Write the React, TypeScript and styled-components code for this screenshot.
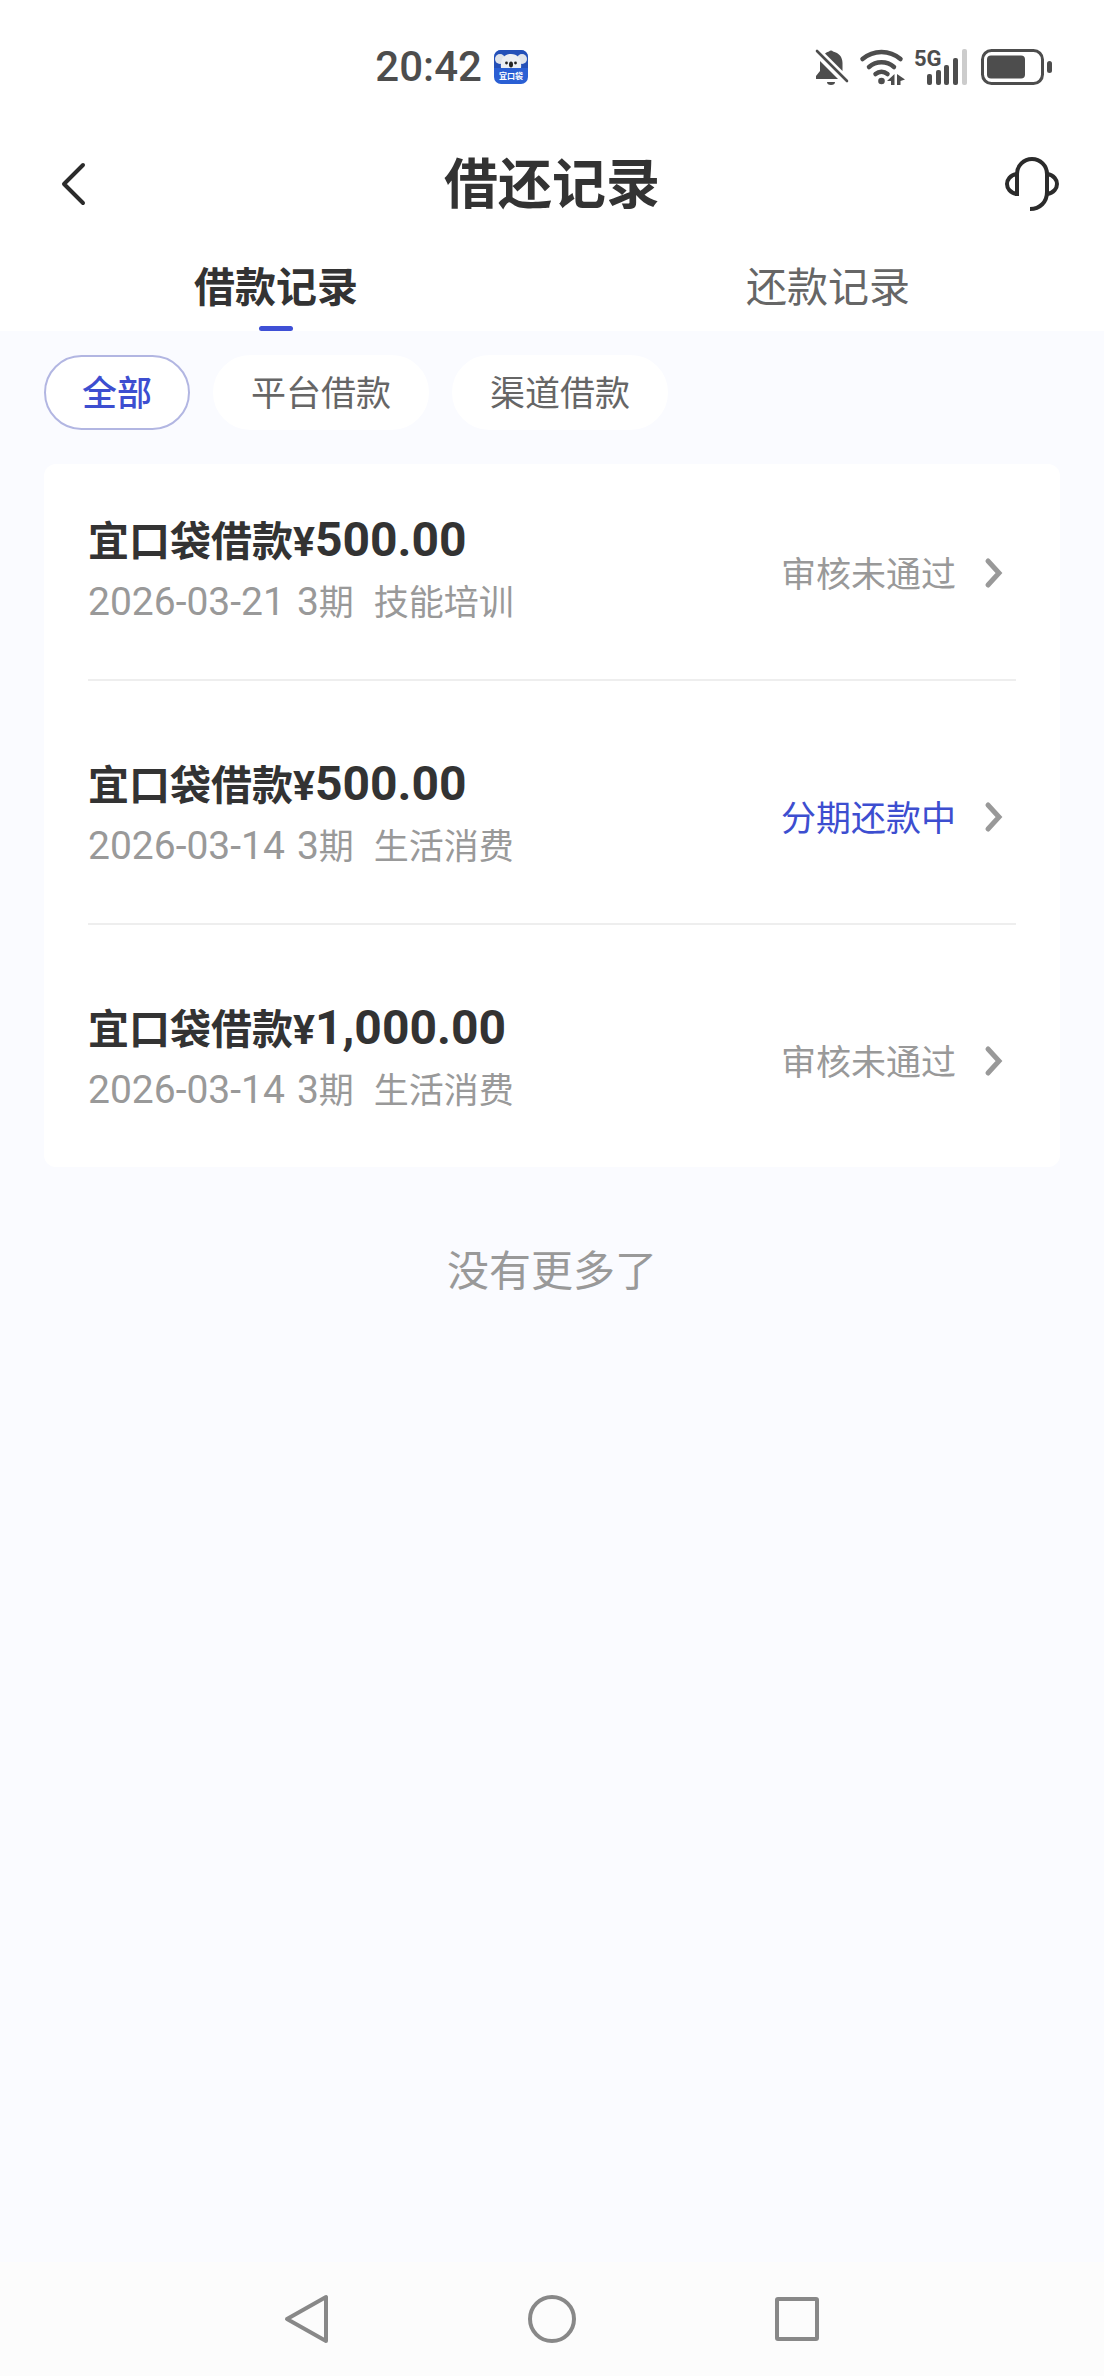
import React, { useState } from "react";
import styled, { createGlobalStyle } from "styled-components";

const cjk = '"Noto Sans CJK SC", sans-serif';
const latin = 'Roboto, "Noto Sans CJK SC", sans-serif';

const GlobalStyle = createGlobalStyle`
  * { box-sizing: border-box; }
  body { margin: 0; background: #fafbff; font-family: ${cjk}; color: #333; }
  button { border: 0; padding: 0; background: none; font: inherit; color: inherit; cursor: pointer; }
  h1, p, ul { margin: 0; padding: 0; }
  ul { list-style: none; }
  svg { display: block; flex: none; overflow: visible; }
`;

const Screen = styled.div`
  display: flex;
  flex-direction: column;
  min-height: 100vh;
`;

const StatusBar = styled.div`
  display: flex;
  justify-content: space-between;
  align-items: center;
  height: 134px;
  padding: 0 52px 0 34%;
  background: #fff;
  color: #4d4d4d;
`;

const StatusGroup = styled.div<{ $gap: number }>`
  display: flex;
  align-items: center;
  gap: ${(p) => p.$gap}px;
`;

const Clock = styled.time`
  font: 500 42px/48px ${latin};
`;

const Header = styled.header`
  display: grid;
  grid-template-columns: 1fr auto 1fr;
  align-items: center;
  height: 98px;
  padding: 0 44px;
  background: #fff;
`;

const HeaderButton = styled.button<{ $end?: boolean }>`
  justify-self: ${(p) => (p.$end ? "end" : "start")};
`;

const Title = styled.h1`
  padding-bottom: 4px;
  font-size: 54px;
  line-height: 80px;
  font-weight: 700;
`;

const Tabs = styled.div`
  display: flex;
  background: #fff;
`;

const Tab = styled.button<{ $active: boolean }>`
  flex: 1;
  display: flex;
  flex-direction: column;
  align-items: center;
  gap: 12px;
  padding-top: 22px;
  font-size: 41px;
  line-height: 60px;
  font-weight: ${(p) => (p.$active ? 700 : 400)};
  color: ${(p) => (p.$active ? "#333" : "#666")};

  &::after {
    content: "";
    width: 34px;
    height: 5px;
    border-radius: 3px;
    background: ${(p) => (p.$active ? "#3f50d6" : "transparent")};
  }
`;

const Main = styled.main`
  flex: 1;
  padding: 24px 44px;
`;

const Filters = styled.div`
  display: flex;
  gap: 23px;
  margin-bottom: 34px;
`;

const Chip = styled.button<{ $active: boolean }>`
  height: 75px;
  padding: 0 36px 4px;
  border: 2px solid ${(p) => (p.$active ? "#b2b6e2" : "#fff")};
  border-radius: 38px;
  background: #fff;
  font-size: 35px;
  line-height: 60px;
  font-weight: ${(p) => (p.$active ? 500 : 400)};
  color: ${(p) => (p.$active ? "#3d4ed0" : "#666")};
`;

const Card = styled.ul`
  padding: 0 44px;
  border-radius: 12px;
  background: #fff;
`;

const Item = styled.li`
  & + & {
    border-top: 2px solid #eee;
    padding-top: 27px;
  }
`;

const Row = styled.a`
  display: flex;
  justify-content: space-between;
  align-items: center;
  padding-right: 14px;
  color: inherit;
  text-decoration: none;
`;

const Details = styled.div`
  display: grid;
  gap: 2px;
  padding: 44px 0 49px;
`;

const Name = styled.p`
  display: flex;
  align-items: baseline;
  height: 60px;
  font-size: 41px;
  line-height: 60px;
  font-weight: 700;
`;

const Currency = styled.span`
  font-family: ${latin};
`;

const Amount = styled.span`
  font-family: ${latin};
  font-size: 48px;
  line-height: 1;
`;

const Meta = styled.p`
  display: flex;
  align-items: baseline;
  height: 60px;
  font-size: 35px;
  line-height: 60px;
  color: #999;
`;

const Term = styled.span`
  margin: 0 20px 0 12px;
`;

const Digits = styled.span`
  font-family: ${latin};
  font-size: 39px;
  line-height: 1;
`;

const State = styled.span<{ $active: boolean }>`
  display: flex;
  align-items: center;
  gap: 28px;
  font-size: 35px;
  line-height: 60px;
  color: ${(p) => (p.$active ? "#3d4ed0" : "#999")};
`;

const EndNote = styled.p`
  padding-top: 70px;
  text-align: center;
  font-size: 42px;
  line-height: 62px;
  color: #999;
`;

const NavBar = styled.nav`
  display: flex;
  justify-content: center;
  align-items: center;
  gap: 197px;
  height: 114px;
  background: #fcfcfc;
`;

const AppBadge = () => (
  <svg width="34" height="34" viewBox="0 0 34 34">
    <rect width="34" height="34" rx="7" fill="#2a5fd4" />
    <path d="M0 18V7a7 7 0 0 1 7-7h20a7 7 0 0 1 7 7v11z" fill="#2450b8" />
    <circle cx="6" cy="9" r="5" fill="#dfe3ea" />
    <circle cx="28" cy="9" r="5" fill="#dfe3ea" />
    <path d="M7 18C6 9 10 4 17 4s11 5 10 14z" fill="#eceef2" />
    <circle cx="12.500" cy="13" r="1.400" fill="#222" />
    <circle cx="21.500" cy="13" r="1.400" fill="#222" />
    <ellipse cx="17" cy="14.500" rx="2" ry="3" fill="#222" />
    <rect y="18" width="34" height="9" fill="#2a5fd4" />
    <text x="17" y="29" textAnchor="middle" fontSize="8" fontWeight="700" fill="#fff" fontFamily="Noto Sans CJK SC, sans-serif">
      宜口袋
    </text>
  </svg>
);

const MutedBell = () => (
  <svg width="34" height="38" viewBox="0 0 34 38" fill="#4d4d4d">
    <path d="M5 13 23 31H1v-3l4-5zM10 5.500A12 12 0 0 1 14 3.500a2.500 2.500 0 0 1 4 0C24 5 27.500 9 27.500 15v8z" />
    <path d="M12 34h8a4 3 0 0 1-8 0z" />
    <path d="m2 3 30 30" stroke="#4d4d4d" strokeWidth="2.600" strokeLinecap="round" />
  </svg>
);

const Wifi = () => (
  <svg width="44" height="36" viewBox="0 0 44 36" fill="none" stroke="#4d4d4d" strokeWidth="4.500" strokeLinecap="round">
    <path d="M2.500 10a29 29 0 0 1 38 0M9 18a19 19 0 0 1 25 0M15.500 25a9.500 9.500 0 0 1 12 0" />
    <circle cx="21.500" cy="32" r="3.300" fill="#4d4d4d" stroke="none" />
    <path d="M34.500 25v11H31v-4h-4zM37 25l8 5.500-4.500 1.500v4H37z" fill="#4d4d4d" stroke="none" />
  </svg>
);

const Signal = () => (
  <svg width="52" height="36" viewBox="0 0 52 36" fill="#4d4d4d">
    <text x="-1" y="17" fontSize="22" fontWeight="700" fontFamily="Roboto, sans-serif">5G</text>
    <rect x="12" y="25" width="5" height="11" rx="2" />
    <rect x="21" y="21" width="5" height="15" rx="2" />
    <rect x="29" y="16" width="5" height="20" rx="2" />
    <rect x="38" y="9" width="5" height="27" rx="2" />
    <rect x="47" y="0" width="5" height="36" rx="2" fill="#ccc" />
  </svg>
);

const Battery = () => (
  <svg width="71" height="36" viewBox="0 0 71 36" fill="#4d4d4d">
    <rect x="1.500" y="1.500" width="60" height="33" rx="9" fill="none" stroke="#4d4d4d" strokeWidth="3" />
    <rect x="6" y="6.500" width="38" height="23" rx="4" />
    <rect x="66" y="12" width="5" height="12" rx="2.500" />
  </svg>
);

const BackIcon = () => (
  <svg width="60" height="60" viewBox="0 0 60 60" fill="none" stroke="#2b2b2b" strokeWidth="4" strokeLinecap="round" strokeLinejoin="round">
    <path d="M39 12 20 31l19 19" />
  </svg>
);

const HeadsetIcon = () => (
  <svg width="56" height="56" viewBox="0 0 56 56" fill="none" stroke="#2b2b2b" strokeWidth="4">
    <path d="M13 41V19a15 15 0 0 1 30 0v18c0 10-7 17-17 17" />
    <path d="M13 19C6 20 3 25 3 29s3 9 10 10M43 19c7 1 10 6 10 10s-3 9-10 10" />
  </svg>
);

const Chevron = () => (
  <svg width="18" height="30" viewBox="0 0 18 30" fill="none" stroke="#999" strokeWidth="5" strokeLinecap="round">
    <path d="m4 4 11 12L4 28" />
  </svg>
);

const NavIcon = ({ children }: { children: React.ReactNode }) => (
  <svg width="48" height="48" viewBox="0 0 48 48" fill="none" stroke="#888" strokeWidth="4" strokeLinejoin="round">
    {children}
  </svg>
);

const records = [
  { amount: "500.00", date: "2026-03-21", term: "3", purpose: "技能培训", state: "审核未通过", active: false },
  { amount: "500.00", date: "2026-03-14", term: "3", purpose: "生活消费", state: "分期还款中", active: true },
  { amount: "1,000.00", date: "2026-03-14", term: "3", purpose: "生活消费", state: "审核未通过", active: false },
];

const tabs = ["借款记录", "还款记录"];
const filters = ["全部", "平台借款", "渠道借款"];

export default function App() {
  const [tab, setTab] = useState(0);
  const [filter, setFilter] = useState(0);

  return (
    <Screen>
      <GlobalStyle />
      <StatusBar>
        <StatusGroup $gap={12}>
          <Clock>20:42</Clock>
          <AppBadge />
        </StatusGroup>
        <StatusGroup $gap={14}>
          <StatusGroup $gap={11}>
            <MutedBell />
            <Wifi />
            <Signal />
          </StatusGroup>
          <Battery />
        </StatusGroup>
      </StatusBar>
      <Header>
        <HeaderButton aria-label="返回">
          <BackIcon />
        </HeaderButton>
        <Title>借还记录</Title>
        <HeaderButton $end aria-label="客服">
          <HeadsetIcon />
        </HeaderButton>
      </Header>
      <Tabs role="tablist">
        {tabs.map((label, i) => (
          <Tab key={label} role="tab" aria-selected={tab === i} $active={tab === i} onClick={() => setTab(i)}>
            {label}
          </Tab>
        ))}
      </Tabs>
      <Main>
        <Filters>
          {filters.map((label, i) => (
            <Chip key={label} aria-pressed={filter === i} $active={filter === i} onClick={() => setFilter(i)}>
              {label}
            </Chip>
          ))}
        </Filters>
        <Card>
          {records.map((r, i) => (
            <Item key={i}>
              <Row href="#">
                <Details>
                  <Name>
                    宜口袋借款<Currency>¥</Currency>
                    <Amount>{r.amount}</Amount>
                  </Name>
                  <Meta>
                    <Digits>{r.date}</Digits>
                    <Term>
                      <Digits>{r.term}</Digits>期
                    </Term>
                    <span>{r.purpose}</span>
                  </Meta>
                </Details>
                <State $active={r.active}>
                  {r.state}
                  <Chevron />
                </State>
              </Row>
            </Item>
          ))}
        </Card>
        <EndNote>没有更多了</EndNote>
      </Main>
      <NavBar>
        <button aria-label="后退">
          <NavIcon>
            <path d="M4 24 43 2v44z" />
          </NavIcon>
        </button>
        <button aria-label="主页">
          <NavIcon>
            <circle cx="24" cy="24" r="22" />
          </NavIcon>
        </button>
        <button aria-label="最近任务">
          <NavIcon>
            <rect x="4" y="4" width="40" height="40" rx="1" />
          </NavIcon>
        </button>
      </NavBar>
    </Screen>
  );
}
